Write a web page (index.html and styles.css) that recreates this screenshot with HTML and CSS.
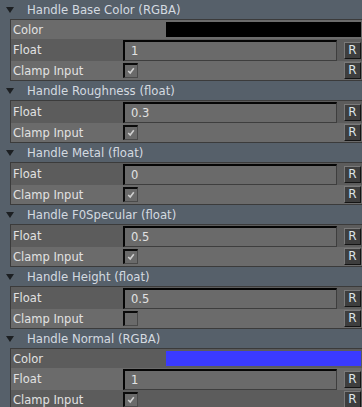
FILE: index.html
```html
<!DOCTYPE html>
<html lang="en">
<head>
    <meta charset="UTF-8">
    <title>Handles</title>
    <link rel="stylesheet" href="styles.css">
</head>
<body>
    <div class="group">
        <div class="group-head"><span class="arrow"></span>Handle Base Color (RGBA)</div>
        <div class="panel">
            <div class="row color-row light">
                <span class="label">Color</span>
                <span class="swatch black"></span>
            </div>
            <div class="row float-row dark">
                <span class="label">Float</span>
                <span class="field">1</span>
                <span class="reset">R</span>
            </div>
            <div class="row clamp-row light">
                <span class="label">Clamp Input</span>
                <span class="check on"><svg viewBox="0 0 15 15"><polyline points="4,7.5 6.5,10 11,4" /></svg></span>
                <span class="spacer"></span>
                <span class="reset">R</span>
            </div>
        </div>
    </div>

    <div class="group">
        <div class="group-head"><span class="arrow"></span>Handle Roughness (float)</div>
        <div class="panel">
            <div class="row float-row dark">
                <span class="label">Float</span>
                <span class="field">0.3</span>
                <span class="reset">R</span>
            </div>
            <div class="row clamp-row light">
                <span class="label">Clamp Input</span>
                <span class="check on"><svg viewBox="0 0 15 15"><polyline points="4,7.5 6.5,10 11,4" /></svg></span>
                <span class="spacer"></span>
                <span class="reset">R</span>
            </div>
        </div>
    </div>

    <div class="group">
        <div class="group-head"><span class="arrow"></span>Handle Metal (float)</div>
        <div class="panel">
            <div class="row float-row dark">
                <span class="label">Float</span>
                <span class="field">0</span>
                <span class="reset">R</span>
            </div>
            <div class="row clamp-row light">
                <span class="label">Clamp Input</span>
                <span class="check on"><svg viewBox="0 0 15 15"><polyline points="4,7.5 6.5,10 11,4" /></svg></span>
                <span class="spacer"></span>
                <span class="reset">R</span>
            </div>
        </div>
    </div>

    <div class="group">
        <div class="group-head"><span class="arrow"></span>Handle F0Specular (float)</div>
        <div class="panel">
            <div class="row float-row dark">
                <span class="label">Float</span>
                <span class="field">0.5</span>
                <span class="reset">R</span>
            </div>
            <div class="row clamp-row light">
                <span class="label">Clamp Input</span>
                <span class="check on"><svg viewBox="0 0 15 15"><polyline points="4,7.5 6.5,10 11,4" /></svg></span>
                <span class="spacer"></span>
                <span class="reset">R</span>
            </div>
        </div>
    </div>

    <div class="group">
        <div class="group-head"><span class="arrow"></span>Handle Height (float)</div>
        <div class="panel">
            <div class="row float-row dark">
                <span class="label">Float</span>
                <span class="field">0.5</span>
                <span class="reset">R</span>
            </div>
            <div class="row clamp-row light">
                <span class="label">Clamp Input</span>
                <span class="check"></span>
                <span class="spacer"></span>
                <span class="reset">R</span>
            </div>
        </div>
    </div>

    <div class="group">
        <div class="group-head"><span class="arrow"></span>Handle Normal (RGBA)</div>
        <div class="panel">
            <div class="row color-row dark">
                <span class="label">Color</span>
                <span class="swatch blue"></span>
            </div>
            <div class="row float-row light">
                <span class="label">Float</span>
                <span class="field">1</span>
                <span class="reset">R</span>
            </div>
            <div class="row clamp-row dark">
                <span class="label">Clamp Input</span>
                <span class="check on"><svg viewBox="0 0 15 15"><polyline points="4,7.5 6.5,10 11,4" /></svg></span>
                <span class="spacer"></span>
                <span class="reset">R</span>
            </div>
        </div>
    </div>
</body>
</html>
```

FILE: styles.css
```css
body {
    margin: 0;
    background: #56606a;
    font-family: 'DejaVu Sans', Verdana, sans-serif;
    font-size: 11.5px;
    color: #e2e2e2;
    overflow: hidden;
}

.group-head {
    height: 19px;
    display: flex;
    align-items: center;
    color: #d4dae0;
    font-size: 11.7px;
}

.arrow {
    width: 0;
    height: 0;
    margin: 1px 13px 0 6px;
    border-left: 4px solid transparent;
    border-right: 4px solid transparent;
    border-top: 6px solid #1c1f22;
}

.panel {
    margin-left: 10px;
    border-top: 1px solid #3b3b3b;
    border-bottom: 1px solid #3b3b3b;
    border-left: 1px solid #3b3b3b;
}

.row {
    display: flex;
    align-items: center;
    padding-right: 1px;
}

.light {
    background: #6b6b6b;
}

.dark {
    background: #5c5c5c;
}

.color-row {
    height: 19px;
}

.float-row {
    height: 22px;
}

.clamp-row {
    height: 19px;
}

.label {
    width: 112px;
    padding-left: 2px;
    box-sizing: border-box;
}

.swatch {
    margin-left: 43px;
    flex: 1;
    height: 15px;
}

.swatch.black {
    background: #000;
}

.swatch.blue {
    background: #3a3aff;
}

.field {
    width: 214px;
    height: 21px;
    box-sizing: border-box;
    border-top: 2px solid #050505;
    border-left: 2px solid #050505;
    border-bottom: 1px solid #3e3e3e;
    border-right: 1px solid #3e3e3e;
    background: #6a6a6a;
    padding: 1px 0 0 6px;
    line-height: 17px;
    align-self: flex-end;
}

.check {
    width: 15px;
    height: 15px;
    box-sizing: border-box;
    border-top: 2px solid #0a0a0a;
    border-left: 2px solid #0a0a0a;
    border-bottom: 1px solid #4a4a4a;
    border-right: 1px solid #4a4a4a;
    background: #6a6a6a;
}

.check svg {
    display: block;
    width: 12px;
    height: 12px;
}

.check polyline {
    fill: none;
    stroke: #cfcfcf;
    stroke-width: 2;
}

.spacer {
    width: 199px;
}

.reset {
    margin-left: 7px;
    width: 17px;
    height: 17px;
    box-sizing: border-box;
    border-top: 1px solid #7a7a7a;
    border-left: 1px solid #7a7a7a;
    border-bottom: 1px solid #141414;
    border-right: 1px solid #141414;
    background: #3e3e3e;
    color: #dde4e8;
    font-size: 12px;
    line-height: 15px;
    text-align: center;
}
```
